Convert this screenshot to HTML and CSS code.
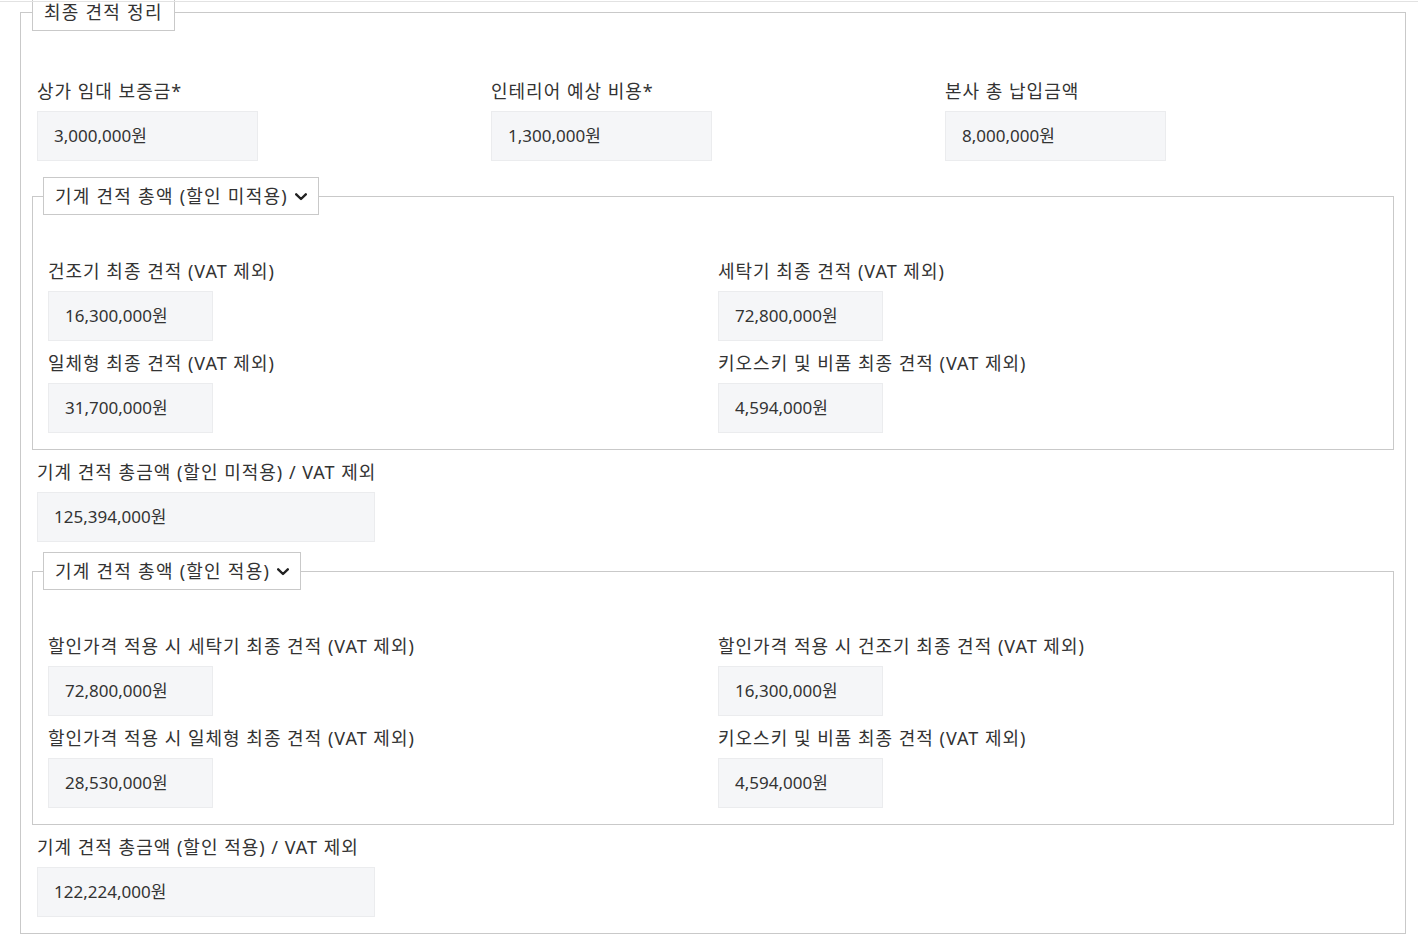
FILE: index.html
```html
<!DOCTYPE html>
<html lang="ko">
<head>
<meta charset="utf-8">
<title>최종 견적 정리</title>
<link rel="stylesheet" href="styles.css">
</head>
<body>
<div class="topline"></div>
<fieldset class="box outer">
  <legend class="legend">최종 견적 정리</legend>
  <div class="grid3">
    <div class="col">
      <div class="label">상가 임대 보증금*</div>
      <div class="field w-lg">3,000,000원</div>
    </div>
    <div class="col">
      <div class="label">인테리어 예상 비용*</div>
      <div class="field w-lg">1,300,000원</div>
    </div>
    <div class="col">
      <div class="label">본사 총 납입금액</div>
      <div class="field w-lg">8,000,000원</div>
    </div>
  </div>

  <fieldset class="box inner first">
    <legend class="legend">기계 견적 총액 (할인 미적용)<svg class="chev" width="12" height="8" viewBox="0 0 12 8"><path d="M1.2 1.3 L6 6 L10.8 1.3" fill="none" stroke="#222" stroke-width="2.4" stroke-linecap="round" stroke-linejoin="round"/></svg></legend>
    <div class="grid2">
      <div class="col">
        <div class="label">건조기 최종 견적 (VAT 제외)</div>
        <div class="field w-sm">16,300,000원</div>
      </div>
      <div class="col">
        <div class="label">세탁기 최종 견적 (VAT 제외)</div>
        <div class="field w-sm">72,800,000원</div>
      </div>
      <div class="col">
        <div class="label">일체형 최종 견적 (VAT 제외)</div>
        <div class="field w-sm">31,700,000원</div>
      </div>
      <div class="col">
        <div class="label">키오스키 및 비품 최종 견적 (VAT 제외)</div>
        <div class="field w-sm">4,594,000원</div>
      </div>
    </div>
  </fieldset>

  <div class="total">
    <div class="label">기계 견적 총금액 (할인 미적용) / VAT 제외</div>
    <div class="field w-md">125,394,000원</div>
  </div>

  <fieldset class="box inner second">
    <legend class="legend">기계 견적 총액 (할인 적용)<svg class="chev" width="12" height="8" viewBox="0 0 12 8"><path d="M1.2 1.3 L6 6 L10.8 1.3" fill="none" stroke="#222" stroke-width="2.4" stroke-linecap="round" stroke-linejoin="round"/></svg></legend>
    <div class="grid2">
      <div class="col">
        <div class="label">할인가격 적용 시 세탁기 최종 견적 (VAT 제외)</div>
        <div class="field w-sm">72,800,000원</div>
      </div>
      <div class="col">
        <div class="label">할인가격 적용 시 건조기 최종 견적 (VAT 제외)</div>
        <div class="field w-sm">16,300,000원</div>
      </div>
      <div class="col">
        <div class="label">할인가격 적용 시 일체형 최종 견적 (VAT 제외)</div>
        <div class="field w-sm">28,530,000원</div>
      </div>
      <div class="col">
        <div class="label">키오스키 및 비품 최종 견적 (VAT 제외)</div>
        <div class="field w-sm">4,594,000원</div>
      </div>
    </div>
  </fieldset>

  <div class="total last">
    <div class="label">기계 견적 총금액 (할인 적용) / VAT 제외</div>
    <div class="field w-md">122,224,000원</div>
  </div>
</fieldset>
</body>
</html>
```
FILE: styles.css
```css
html, body {
  margin: 0;
  padding: 0;
  background: #fff;
}
body {
  font-family: "Noto Sans", "Noto Sans CJK KR", sans-serif;
  color: #333;
  font-size: 18px;
}
.topline {
  position: fixed;
  top: 1px;
  left: 0;
  right: 0;
  height: 1px;
  background: #e2e2e2;
}
.box {
  border: 1px solid #c9c9c9;
  margin: 0;
  min-width: 0;
}
.outer {
  margin: -7px 12px 0 20px;
  padding: 46px 11px 8px 11px;
}
.inner {
  padding: 42px 10px 8px 10px;
}
.inner.first {
  margin-top: 8px;
}
.inner.second {
  margin-top: 10px;
}
.legend {
  border: 1px solid #c9c9c9;
  padding: 5px 11px;
  line-height: 26px;
  font-size: 18px;
  letter-spacing: 1.25px;
  color: #333;
  display: flex;
  align-items: center;
}
.chev {
  margin-left: 7px;
  margin-top: 2px;
}
.grid3 {
  display: grid;
  grid-template-columns: repeat(3, 1fr);
}
.grid2 {
  display: grid;
  grid-template-columns: repeat(2, 1fr);
}
.col, .total {
  padding: 0 5px;
}
.total {
  margin-top: 8px;
}
.label {
  line-height: 27px;
  padding-top: 1px;
  margin-bottom: 6px;
  letter-spacing: 1px;
  white-space: nowrap;
}
.field {
  box-sizing: border-box;
  height: 50px;
  margin-bottom: 8px;
  background: #f5f6f8;
  border: 1px solid #ebecee;
  padding: 0 16px 3px 16px;
  display: flex;
  align-items: center;
  font-size: 17px;
  color: #333;
}
.w-lg { width: 221px; }
.w-md { width: 338px; }
.w-sm { width: 165px; }
```
